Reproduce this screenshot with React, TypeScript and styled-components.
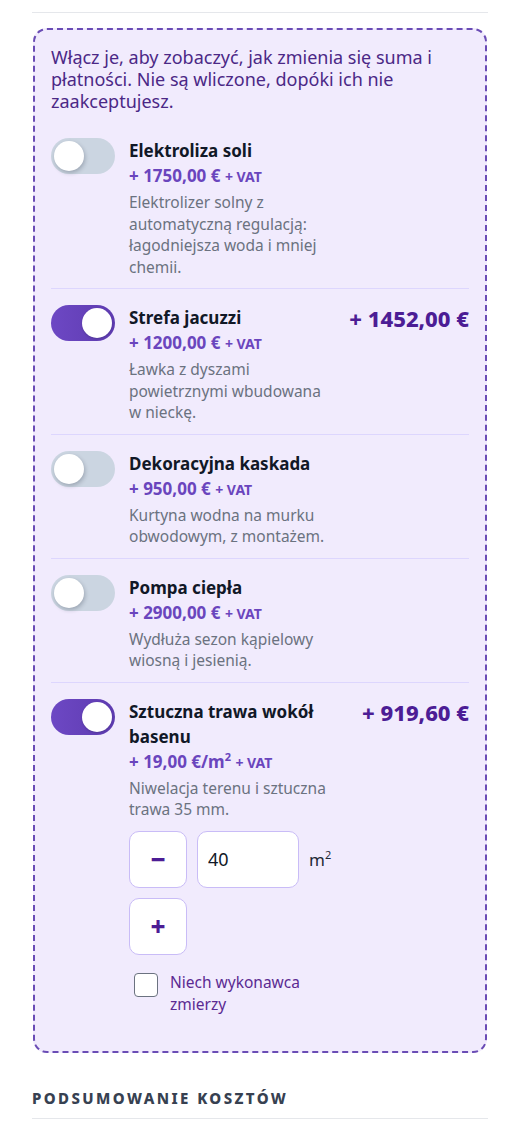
import React, { useState } from "react";
import styled, { createGlobalStyle, css } from "styled-components";

const GlobalStyle = createGlobalStyle`
  * { box-sizing: border-box; }
  body {
    margin: 0;
    background: #ffffff;
    font-family: "Noto Sans", "Open Sans", sans-serif;
  }
`;

type Extra = {
  id: string;
  title: string;
  price: string;
  unit?: boolean;
  desc: string;
  total?: string;
  stepper?: boolean;
};

const extras: Extra[] = [
  {
    id: "salt",
    title: "Elektroliza soli",
    price: "+ 1750,00 €",
    desc: "Elektrolizer solny z automatyczną regulacją: łagodniejsza woda i mniej chemii.",
  },
  {
    id: "jacuzzi",
    title: "Strefa jacuzzi",
    price: "+ 1200,00 €",
    desc: "Ławka z dyszami powietrznymi wbudowana w nieckę.",
    total: "+ 1452,00 €",
  },
  {
    id: "cascade",
    title: "Dekoracyjna kaskada",
    price: "+ 950,00 €",
    desc: "Kurtyna wodna na murku obwodowym, z montażem.",
  },
  {
    id: "heat",
    title: "Pompa ciepła",
    price: "+ 2900,00 €",
    desc: "Wydłuża sezon kąpielowy wiosną i jesienią.",
  },
  {
    id: "grass",
    title: "Sztuczna trawa wokół basenu",
    price: "+ 19,00 €/m",
    unit: true,
    desc: "Niwelacja terenu i sztuczna trawa 35 mm.",
    total: "+ 919,60 €",
    stepper: true,
  },
];

const App = () => {
  const [on, setOn] = useState<Record<string, boolean>>({ jacuzzi: true, grass: true });
  const [area, setArea] = useState("40");
  const [measure, setMeasure] = useState(false);

  return (
    <Page>
      <GlobalStyle />
      <TopRule />
      <ExtrasBox>
        <Intro>
          Włącz je, aby zobaczyć, jak zmienia się suma i płatności. Nie są
          wliczone, dopóki ich nie zaakceptujesz.
        </Intro>
        {extras.map((x) => (
          <Item key={x.id}>
            <Toggle
              type="button"
              $on={!!on[x.id]}
              aria-pressed={!!on[x.id]}
              onClick={() => setOn({ ...on, [x.id]: !on[x.id] })}
            >
              <Knob $on={!!on[x.id]} />
            </Toggle>
            <Body>
              <Title>{x.title}</Title>
              <PriceLine>
                {x.price}
                {x.unit && <sup>2</sup>} <Vat>+ VAT</Vat>
              </PriceLine>
              <Desc>{x.desc}</Desc>
              {x.stepper && (
                <>
                  <Stepper>
                    <StepButton type="button" onClick={() => setArea(String(Math.max(0, Number(area) - 1)))}>
                      −
                    </StepButton>
                    <AreaInput value={area} onChange={(e) => setArea(e.target.value)} />
                    <Unit>
                      m<sup>2</sup>
                    </Unit>
                    <StepButton type="button" onClick={() => setArea(String(Number(area) + 1))}>
                      +
                    </StepButton>
                  </Stepper>
                  <CheckRow>
                    <Check
                      type="checkbox"
                      checked={measure}
                      onChange={(e) => setMeasure(e.target.checked)}
                    />
                    <CheckLabel>Niech wykonawca zmierzy</CheckLabel>
                  </CheckRow>
                </>
              )}
            </Body>
            <Total>{on[x.id] ? x.total : ""}</Total>
          </Item>
        ))}
      </ExtrasBox>
      <SummaryHeading>Podsumowanie kosztów</SummaryHeading>
    </Page>
  );
};

export default App;

const Page = styled.div`
  padding: 12px 32px 0;
`;

const TopRule = styled.div`
  height: 1px;
  background: #e5e7eb;
`;

const ExtrasBox = styled.section`
  margin: 15px 1px 0;
  padding: 16px 16px 26px;
  background: #f1ebfd;
  border: 2.5px dashed #6a4cb5;
  border-radius: 14px;
`;

const Intro = styled.p`
  margin: 0 0 10px;
  font-size: 18px;
  line-height: 22px;
  color: #4b2886;
`;

const Item = styled.div`
  display: grid;
  grid-template-columns: 64px minmax(0, 1fr) 122px;
  column-gap: 14px;
  align-items: start;
  padding: 16px 0 10px;
  & + & {
    border-top: 1px solid #ddd6fe;
  }
`;

const Toggle = styled.button<{ $on: boolean }>`
  position: relative;
  width: 64px;
  height: 36px;
  padding: 0;
  border: none;
  border-radius: 18px;
  cursor: pointer;
  background: #cbd5e1;
  ${(p) =>
    p.$on &&
    css`
      background: linear-gradient(90deg, #6d48c4, #5e3bb0);
    `}
`;

const Knob = styled.span<{ $on: boolean }>`
  position: absolute;
  top: 3px;
  left: ${(p) => (p.$on ? "31px" : "3px")};
  width: 30px;
  height: 30px;
  border-radius: 50%;
  background: #ffffff;
  box-shadow: ${(p) => (p.$on ? "0 1px 2px rgba(15, 23, 42, 0.2)" : "1px 2px 4px rgba(15, 23, 42, 0.25)")};
`;

const Body = styled.div`
  display: flex;
  flex-direction: column;
  align-items: flex-start;
`;

const Title = styled.div`
  font-size: 17px;
  font-weight: 700;
  line-height: 25px;
  color: #111827;
`;

const PriceLine = styled.div`
  margin-top: 2px;
  font-size: 17px;
  font-weight: 700;
  line-height: 22px;
  color: #6a45bd;
  sup {
    font-size: 11px;
    line-height: 0;
  }
`;

const Vat = styled.span`
  font-size: 14px;
`;

const Desc = styled.p`
  margin: 4px 0 0;
  font-size: 15.5px;
  line-height: 21.5px;
  color: #6b7280;
`;

const Total = styled.div`
  text-align: right;
  font-size: 22px;
  font-weight: 800;
  line-height: 26px;
  color: #4c1d95;
  white-space: nowrap;
`;

const Stepper = styled.div`
  display: flex;
  flex-wrap: wrap;
  align-items: center;
  gap: 10px;
  margin-top: 10px;
`;

const StepButton = styled.button`
  width: 58px;
  height: 57px;
  border: 1.5px solid #c9bcf7;
  border-radius: 10px;
  background: #ffffff;
  font-family: "Noto Sans", sans-serif;
  font-size: 26px;
  font-weight: 800;
  color: #4c1d95;
  cursor: pointer;
`;

const AreaInput = styled.input`
  width: 102px;
  height: 57px;
  padding: 0 10px;
  border: 1.5px solid #c9bcf7;
  border-radius: 10px;
  background: #ffffff;
  font-family: "Noto Sans", sans-serif;
  font-size: 18px;
  color: #111827;
  outline: none;
`;

const Unit = styled.span`
  font-size: 17px;
  color: #1f2937;
  sup {
    font-size: 11px;
  }
`;

const CheckRow = styled.label`
  display: flex;
  align-items: flex-start;
  gap: 12px;
  margin-top: 16px;
  padding-left: 5px;
  cursor: pointer;
`;

const Check = styled.input`
  appearance: none;
  flex: none;
  width: 24px;
  height: 24px;
  margin: 2px 0 0;
  border: 1.5px solid #6b7280;
  border-radius: 4px;
  background: #ffffff;
`;

const CheckLabel = styled.span`
  font-size: 15.5px;
  line-height: 22px;
  color: #5b2a92;
`;

const SummaryHeading = styled.h2`
  margin: 35px 0 0;
  padding-bottom: 10px;
  border-bottom: 1px solid #e5e7eb;
  font-size: 15px;
  font-weight: 800;
  letter-spacing: 2.4px;
  text-transform: uppercase;
  color: #374151;
`;
